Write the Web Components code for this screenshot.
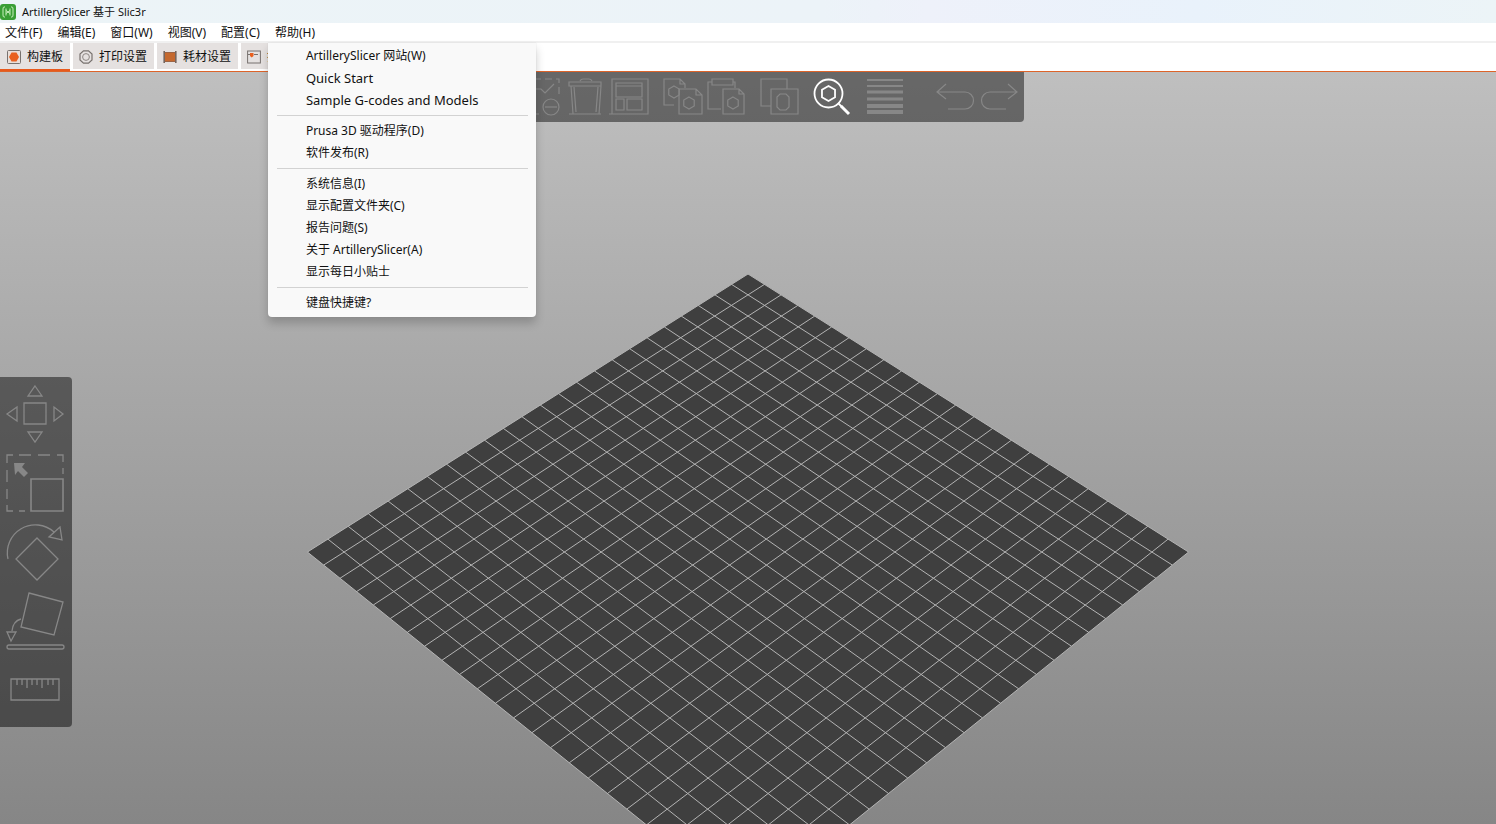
<!DOCTYPE html>
<html lang="zh-CN">
<head>
<meta charset="utf-8">
<title>ArtillerySlicer</title>
<style>
  body { margin: 0; font: 12px/16px "Noto Sans", "Noto Sans CJK SC", sans-serif; color: #111; background: #fff; }
</style>
</head>
<body>
<slicer-app></slicer-app>
<script>
const define = (name, html, setup) => {
  const template = document.createElement('template');
  template.innerHTML = html;
  customElements.define(name, class extends HTMLElement {
    constructor() {
      super();
      this.attachShadow({ mode: 'open' }).append(template.content.cloneNode(true));
    }
    connectedCallback() { if (setup) setup(this, this.shadowRoot); }
  });
};

define('slicer-titlebar', `
  <style>
    :host { display: flex; align-items: center; gap: 6px; height: 23px; font-size: 11px; background: linear-gradient(90deg, #ecf4f7 0%, #ecf3f8 55%, #eef1fa 62%, #e9f2fb 80%, #ecf4f7 100%); }
    svg { width: 16px; height: 16px; }
    h1 { margin: 0; font: inherit; }
  </style>
  <svg viewBox="0 0 16 16" aria-hidden="true">
    <rect width="16" height="16" rx="3" fill="#3a9e35"/>
    <path d="M5 3H4Q3 3 3 5V11Q3 13 4 13H5M11 3h1Q13 3 13 5V11Q13 13 12 13H11M6 4.500V11.500M10 4.500V11.500M6 6.500L10 9.500M10 6.500L6 9.500" fill="none" stroke="#c8f0bd" stroke-width="1"/>
  </svg>
  <h1><slot></slot></h1>`);

define('slicer-menu-item', `
  <style>
    :host { display: block; }
    :host([latin]) { font-size: 13px; }
    button { display: block; width: 100%; height: 22px; padding: 0 38px; border: 0; background: none; font: inherit; color: inherit; text-align: left; white-space: nowrap; }
    button:hover { background: #ececec; }
  </style>
  <button type="button" role="menuitem"><slot></slot></button>`);

define('slicer-separator', `
  <style>
    :host { display: block; padding: 4px 8px 4px 9px; }
    hr { margin: 0; border: 0; height: 1px; background: #d2d2d2; }
  </style><hr>`);

define('slicer-menu', `
  <style>
    :host { display: block; position: relative; }
    button { height: 18px; padding: 2px 8px 0 7px; border: 0; background: none; font: inherit; color: inherit; white-space: nowrap; }
    .popup { position: absolute; z-index: 5; top: 20px; left: 0; width: 268px; box-sizing: border-box; padding: 2px 0 3px; background: #f9f9f9; border-radius: 0 0 4px 4px; box-shadow: 0 0 1px #8888, 0 6px 10px #0003; }
    .popup[hidden] { display: none; }
  </style>
  <button type="button" aria-haspopup="menu"></button>
  <div class="popup" role="menu"><slot></slot></div>`,
  (host, root) => {
    const button = root.querySelector('button');
    const popup = root.querySelector('.popup');
    button.textContent = host.getAttribute('label');
    popup.hidden = !host.hasAttribute('open');
    button.setAttribute('aria-expanded', String(!popup.hidden));
  });

define('slicer-menubar', `
  <style>
    :host { display: flex; height: 18px; margin-left: -2px; border-bottom: 2px solid #f0f0f0; }
  </style><slot></slot>`);

const tabIcons = {
  plate: '<rect x=".5" y=".5" width="13" height="13" rx="1" fill="#eadfd9" stroke="#77716e"/><path d="M4.500 2.500h5L12 7l-2.500 4.500h-5L2 7z" fill="#e9601f"/>',
  print: '<path d="M4.500 .8h5l3.500 3.200v6l-3.500 3.200h-5L1 10V4z" fill="none" stroke="#77716e" stroke-width="1.200"/><circle cx="7" cy="7" r="3.400" fill="none" stroke="#8d8784"/>',
  filament: '<rect x="2" y="2" width="10" height="10" fill="#c5692f"/><path d="M1.200 1v12M12.800 1v12" stroke="#75665f" stroke-width="1.600"/><path d="M2 2.500h10M2 11.500h10" stroke="#9d6444"/>',
  printer: '<rect x=".6" y="1" width="12.800" height="12" fill="none" stroke="#77716e"/><path d="M1 4.500h3M7 4.500h4" stroke="#77716e"/><path d="M3 3h3.500v3L4.700 7.500 3 6z" fill="#e9601f"/>'
};
define('slicer-tab', `
  <style>
    :host { display: block; }
    button { display: flex; align-items: center; gap: 6px; height: 28px; box-sizing: border-box; padding: 3px 7px 1px 6px; border: 0; border-bottom: 2px solid transparent; background: #e5e1e0; background-clip: padding-box; font: inherit; color: inherit; white-space: nowrap; }
    :host([selected]) button { padding-left: 7px; border-bottom-color: #e8591c; }
    svg { width: 14px; height: 14px; }
  </style>
  <button type="button" role="tab"><svg viewBox="0 0 14 14" aria-hidden="true"></svg><slot></slot></button>`,
  (host, root) => {
    root.querySelector('svg').innerHTML = tabIcons[host.getAttribute('icon')];
    root.querySelector('button').setAttribute('aria-selected', String(host.hasAttribute('selected')));
  });

define('slicer-tabs', `
  <style>:host { display: flex; gap: 3px; height: 28px; border-bottom: 1px solid #dd642a; }</style>
  <slot></slot>`);

const hex = (x, y, r) => `<path d="M${x} ${y - r}l${r * .87} ${r / 2}v${r}l${-r * .87} ${r / 2}l${-r * .87} ${-r / 2}v${-r}z"/>`;
const toolIcons = {
  add: `<path d="M4 4h36v35H4z" stroke-dasharray="7 4"/>${hex(20, 20, 9)}<circle cx="32" cy="32" r="8"/><path d="M26 32h12M32 26v12"/>`,
  remove: `<path d="M4 4h36v18M4 4v35h18" stroke-dasharray="7 4"/><path d="M13 14h9l4 4 9-9"/><circle cx="32" cy="32" r="8"/><path d="M26 32h12"/>`,
  trash: '<path d="M17 6q1-2 3-2h6q2 0 3 2M6 7h32v4H6zM8 11l2 28M38 11l-2 28M11 12l2 25M35 12l-2 25M6 39h32"/>',
  arrange: '<path d="M5 4h36v35H5zM9 8h26v14H9zM9 11h26M9 24h8v11H9zM20 24h15v11H20zM2 39h39"/>',
  copy: `<path d="M14 30H4V4h16l5 5v4M20 4v5h5M19 39V14h17l6 6v19zM36 14v6h6"/>${hex(14, 17, 6)}${hex(29, 28, 6)}`,
  paste: `<path d="M8 7H4v27h13M29 7h2v6M8 4h21v6H8zM19 39V14h16l5 5v20zM35 14v5h5"/>${hex(29, 28, 6)}`,
  instances: '<path d="M14 31H4V4h26v10M14 14h27v25H14zM23 19h6l3 3v10l-3 3h-6l-3-3V22z"/>',
  search: `<circle cx="18.500" cy="18.500" r="14"/>${hex(18.5, 18.5, 7.5)}<path d="M28 28l4 4"/><path d="M31 31l8 8" stroke-width="3"/>`,
  layers: '<path d="M4 5h36" stroke-width="2"/><path d="M4 11h36" stroke-width="2"/><path d="M4 17h36M4 24h36" stroke-width="3"/><path d="M4 31h36M4 37h36" stroke-width="4"/>',
  undo: '<path d="M13 9l-9 8 9 7M4 17h28a8 8 0 0 1 0 17H15"/>',
  redo: '<path d="M31 9l9 8-9 7M40 17H13a8 8 0 0 0 0 17h16"/>',
  move: '<path d="M24 23h22v21H24zM35 6l7 10H28zM28 52h14l-7 10zM7 34l10-7v14zM63 34l-9-7v14z"/>',
  scale: '<path d="M7 14V6h6M19 6h12M38 6h12M57 6h6v7M63 19v6M7 21v12M7 40v10M7 56v6h6M19 62h6"/><path d="M31 30h32v32H31z" stroke-width="1.600"/><path d="M14 14h11l-3 4 6 6-4 4-6-6-3 4z" fill="currentColor" stroke="none"/>',
  rotate: '<path d="M8 41A28 28 0 0 1 54 14M60 9L49 19l13 3zM37 20l21 21-21 21-21-21z"/>',
  flatten: '<path d="M29 6l34 9-9 33-33-8zM21 32q-8 2-9 12M7 45h9l-5 9z"/><rect x="7" y="58" width="57" height="4" rx="2"/>',
  ruler: '<path d="M11 23h48v21H11zM17 23v6M22 23v6M27 23v9M32 23v6M37 23v6M42 23v9M48 23v6M53 23v6"/>'
};
define('tool-button', `
  <style>
    :host { display: block; color: #878787; }
    :host([active]) { color: #fff; }
    button { display: block; padding: 0; border: 0; background: none; color: inherit; }
    svg { display: block; width: 44px; height: 44px; fill: none; stroke: currentColor; stroke-width: 1.200; }
    :host([large]) svg { width: 72px; height: 69px; stroke-width: 1.300; }
    :host([active]) svg { stroke-width: 1.800; }
  </style>
  <button type="button"><svg aria-hidden="true"></svg></button>`,
  (host, root) => {
    const svg = root.querySelector('svg');
    svg.setAttribute('viewBox', host.hasAttribute('large') ? '0 0 72 69' : '0 0 44 44');
    svg.innerHTML = toolIcons[host.getAttribute('icon')];
    root.querySelector('button').setAttribute('aria-label', host.getAttribute('label'));
  });

define('top-toolbar', `
  <style>
    :host { display: flex; padding: 3px; background: rgb(0 0 0 / 46%); border-radius: 0 0 4px 4px; }
    .group { display: flex; }
    .group + .group { margin-left: 9px; }
    .group.history { margin-left: 26px; }
  </style>
  <div class="group">
    <tool-button icon="add" label="添加"></tool-button><tool-button icon="remove" label="删除"></tool-button>
    <tool-button icon="trash" label="全部删除"></tool-button><tool-button icon="arrange" label="排列"></tool-button>
  </div>
  <div class="group"><tool-button icon="copy" label="复制"></tool-button><tool-button icon="paste" label="粘贴"></tool-button></div>
  <div class="group"><tool-button icon="instances" label="实例"></tool-button></div>
  <div class="group"><tool-button icon="search" label="搜索" active></tool-button></div>
  <div class="group"><tool-button icon="layers" label="可变层高"></tool-button></div>
  <div class="group history"><tool-button icon="undo" label="撤销"></tool-button><tool-button icon="redo" label="重做"></tool-button></div>`);

define('side-toolbar', `
  <style>:host { display: block; padding: 3px 0 2px; background: rgb(0 0 0 / 47%); border-radius: 0 4px 4px 0; }</style>
  <tool-button large icon="move" label="移动"></tool-button>
  <tool-button large icon="scale" label="缩放"></tool-button>
  <tool-button large icon="rotate" label="旋转"></tool-button>
  <tool-button large icon="flatten" label="放置面"></tool-button>
  <tool-button large icon="ruler" label="测量"></tool-button>`);

define('print-bed', `
  <style>
    :host { display: block; }
    svg { display: block; width: 100%; height: 100%; }
  </style>
  <svg viewBox="0 72 1496 752" preserveAspectRatio="xMidYMid slice" role="img" aria-label="打印平台">
    <path id="bed" fill="#3f3f3f"/><path id="grid" fill="none" stroke="#b4b4b4" stroke-width="1"/>
  </svg>`,
  (host, root) => {
    // Perspective projection of the square bed, u and v in 0..1 from the far corner.
    const project = (u, v) => {
      const w = 1 - .108 * (u + v);
      return `${(748 + 393 * (u - v) / w).toFixed(2)} ${((274 + 218.4 * (u + v)) / w).toFixed(2)}`;
    };
    const cells = 24;
    let d = '';
    for (let i = 0; i <= cells; i++) {
      const t = i / cells;
      d += `M${project(t, 0)}L${project(t, 1)}M${project(0, t)}L${project(1, t)}`;
    }
    root.getElementById('grid').setAttribute('d', d);
    root.getElementById('bed').setAttribute('d', `M${project(0, 0)}L${project(1, 0)}L${project(1, 1)}L${project(0, 1)}z`);
  });

define('slicer-viewport', `
  <style>
    :host { display: flex; position: relative; overflow: hidden; background: linear-gradient(#bfbfbf, #868686); }
    print-bed { position: absolute; inset: 0; }
    header { position: relative; flex: 1; display: flex; justify-content: center; align-items: flex-start; }
    side-toolbar { position: absolute; left: 0; top: 305px; }
  </style>
  <print-bed></print-bed>
  <header><top-toolbar></top-toolbar></header>
  <side-toolbar></side-toolbar>`);

define('slicer-app', `
  <style>
    :host { display: flex; flex-direction: column; height: 100vh; }
    slicer-viewport { flex: 1; min-height: 0; }
  </style>
  <slicer-titlebar>ArtillerySlicer 基于 Slic3r</slicer-titlebar>
  <slicer-menubar>
    <slicer-menu label="文件(F)"></slicer-menu>
    <slicer-menu label="编辑(E)"></slicer-menu>
    <slicer-menu label="窗口(W)"></slicer-menu>
    <slicer-menu label="视图(V)"></slicer-menu>
    <slicer-menu label="配置(C)"></slicer-menu>
    <slicer-menu label="帮助(H)" open>
      <slicer-menu-item>ArtillerySlicer 网站(W)</slicer-menu-item>
      <slicer-menu-item latin>Quick Start</slicer-menu-item>
      <slicer-menu-item latin>Sample G-codes and Models</slicer-menu-item>
      <slicer-separator></slicer-separator>
      <slicer-menu-item>Prusa 3D 驱动程序(D)</slicer-menu-item>
      <slicer-menu-item>软件发布(R)</slicer-menu-item>
      <slicer-separator></slicer-separator>
      <slicer-menu-item>系统信息(I)</slicer-menu-item>
      <slicer-menu-item>显示配置文件夹(C)</slicer-menu-item>
      <slicer-menu-item>报告问题(S)</slicer-menu-item>
      <slicer-menu-item>关于 ArtillerySlicer(A)</slicer-menu-item>
      <slicer-menu-item>显示每日小贴士</slicer-menu-item>
      <slicer-separator></slicer-separator>
      <slicer-menu-item>键盘快捷键?</slicer-menu-item>
    </slicer-menu>
  </slicer-menubar>
  <slicer-tabs role="tablist">
    <slicer-tab icon="plate" selected>构建板</slicer-tab>
    <slicer-tab icon="print">打印设置</slicer-tab>
    <slicer-tab icon="filament">耗材设置</slicer-tab>
    <slicer-tab icon="printer">打印机</slicer-tab>
  </slicer-tabs>
  <slicer-viewport></slicer-viewport>`);
</script>
</body>
</html>
